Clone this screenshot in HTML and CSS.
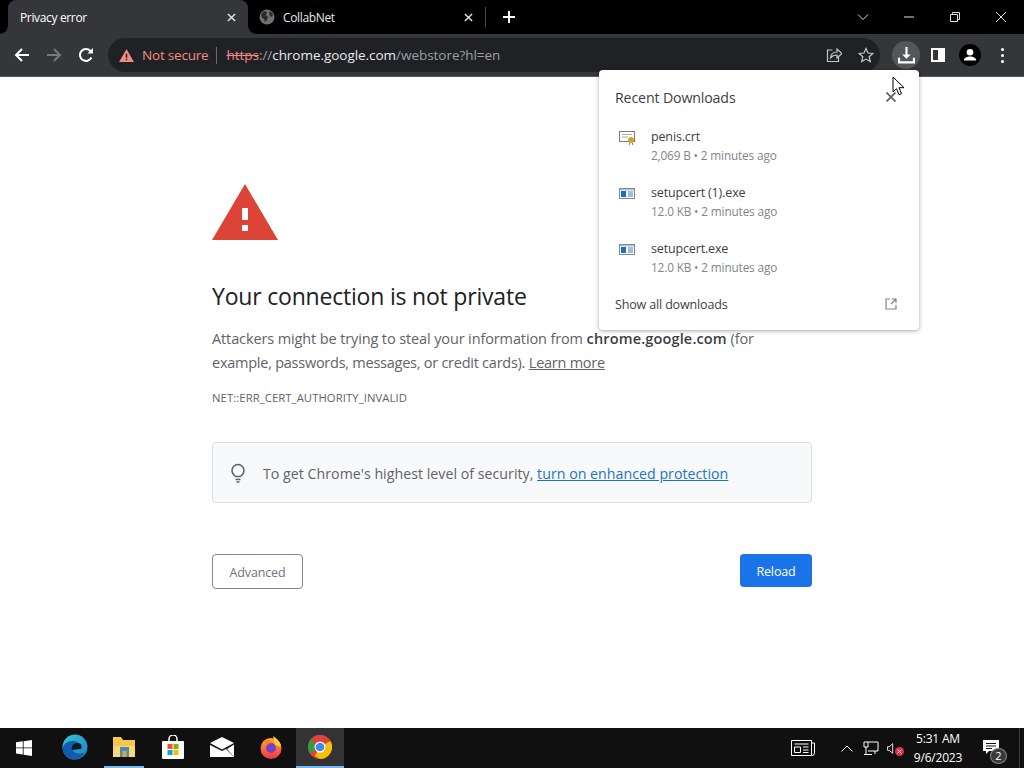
FILE: index.html
```html
<!DOCTYPE html>
<html lang="en">
<head>
<meta charset="utf-8">
<title>Privacy error</title>
<link rel="stylesheet" href="styles.css">
</head>
<body>
<div class="browser">
  <div class="tabstrip">
    <div class="tab active">
      <span class="tab-title">Privacy error</span>
      <svg class="tab-x" viewBox="0 0 10 10"><path d="M1 1l8 8M9 1l-8 8"/></svg>
    </div>
    <div class="tab">
      <svg class="globe" viewBox="0 0 16 16"><circle cx="8" cy="8" r="7.5" fill="#6f7275"/><path d="M2 5l3-3 3 1-1 3 2 2-1 3-2 2-1-3-2-1zM11 2l3 3-1 3-2-1-1-3z" fill="#2a2b2d"/></svg>
      <span class="tab-title">CollabNet</span>
      <svg class="tab-x" viewBox="0 0 10 10"><path d="M1 1l8 8M9 1l-8 8"/></svg>
    </div>
    <span class="tab-sep"></span>
    <svg class="newtab" viewBox="0 0 12 12"><path d="M6 0v12M0 6h12"/></svg>
    <div class="winctl">
      <svg class="wc wc-chev" viewBox="0 0 12 12"><path d="M1 3.5l5 5 5-5"/></svg>
      <svg class="wc" viewBox="0 0 12 12"><path d="M1 6h10"/></svg>
      <svg class="wc" viewBox="0 0 12 12"><path d="M1.5 3.5h7v7h-7zM3.5 3.5v-2h7v7h-2"/></svg>
      <svg class="wc" viewBox="0 0 12 12"><path d="M1 1l10 10M11 1L1 11"/></svg>
    </div>
  </div>
  <div class="toolbar">
    <svg class="nav" viewBox="0 0 16 16"><path class="st-w" d="M15 8H2M8 2L2 8l6 6"/></svg>
    <svg class="nav" viewBox="0 0 16 16"><path class="st-g" d="M1 8h13M8 2l6 6-6 6"/></svg>
    <svg class="nav" viewBox="0 0 16 16"><path class="st-w" d="M13.4 10.5A6 6 0 1 1 12.5 4"/><path d="M9.5 6.5h5.5V1z" fill="#fff"/></svg>
    <div class="omnibox">
      <svg class="warn" viewBox="0 0 16 14"><path d="M8 0l8 14H0z" fill="#f28b82"/><path d="M7.2 5h1.6v4.5H7.2zM7.2 10.4h1.6V12H7.2z" fill="#202124"/></svg>
      <span class="notsecure">Not secure</span>
      <span class="omni-sep"></span>
      <span class="url"><s class="scheme">https</s><span class="dim">://</span><span class="host">chrome.google.com</span><span class="dim">/webstore?hl=en</span></span>
      <svg class="omni-ic" viewBox="0 0 16 16"><path d="M6.5 3H1.5v11.5h11V10M4.5 11c.3-4 3-6 6.5-6V2l5 4.5-5 4.5V8c-3 0-5 1-6.500 3z"/></svg>
      <svg class="omni-ic star" viewBox="0 0 16 16"><path d="M8 1.500l2 4.500 4.800.5-3.600 3.200 1 4.800L8 12.100l-4.200 2.400 1-4.800L1.200 6.500 6 6z"/></svg>
    </div>
    <div class="dl-btn">
      <svg viewBox="0 0 16 16"><path d="M7 0h2v7h3l-4 4-4-4h3z" fill="#fff"/><path d="M1 10v4.500h14V10" fill="none" stroke="#fff" stroke-width="2"/></svg>
    </div>
    <div class="sidepanel"><span></span></div>
    <div class="avatar">
      <svg viewBox="0 0 22 22"><circle cx="11" cy="11" r="11" fill="#000"/><circle cx="11" cy="8.300" r="3.300" fill="#fff"/><path d="M4.800 16.500c0-2.800 3.500-4 6.200-4s6.200 1.200 6.200 4z" fill="#fff"/></svg>
    </div>
    <div class="kebab"><i></i><i></i><i></i></div>
  </div>
  <main class="page">
    <div class="interstitial">
      <svg class="bigwarn" viewBox="0 0 66 56"><path d="M33 0l33 56H0z" fill="#db4437"/><path d="M30 24h6v12h-6zM30 41h6v6h-6z" fill="#fff"/></svg>
      <h1>Your connection is not private</h1>
      <p class="lead">Attackers might be trying to steal your information from <b>chrome.google.com</b> (for<br><span class="tight">example, passwords, messages, or credit cards).</span> <a class="plain">Learn more</a></p>
      <p class="code">NET::ERR_CERT_AUTHORITY_INVALID</p>
      <div class="promo">
        <svg class="bulb" viewBox="0 0 14 20"><path d="M4.500 13.500C2.500 12 1 10.500 1 7.500a6 6 0 0 1 12 0c0 3-1.500 4.500-3.500 6z"/><path d="M4.500 16.500h5M5.500 19h3"/></svg>
        <span>To get Chrome's highest level of security, <a class="blue">turn on enhanced protection</a></span>
      </div>
      <div class="actions">
        <button class="btn-adv">Advanced</button>
        <button class="btn-reload">Reload</button>
      </div>
    </div>
    <aside class="bubble">
      <div class="bubble-head">
        <span>Recent Downloads</span>
        <svg class="bubble-x" viewBox="0 0 10 10"><path d="M.5.500l9 9M9.500.500l-9 9"/></svg>
      </div>
      <div class="dl">
        <svg class="file" viewBox="0 0 18 16"><rect x=".5" y="1.500" width="15" height="10" fill="#fff" stroke="#7a7a7a"/><path d="M3 4.500h10M3 7h6" stroke="#a8a8a8"/><circle cx="12" cy="10" r="3" fill="#d6a32a"/><path d="M10.500 12.500v2.500M13.500 12.500v2.500" stroke="#c08a1a"/></svg>
        <div><div class="fname">penis.crt</div><div class="fmeta">2,069 B • 2 minutes ago</div></div>
      </div>
      <div class="dl">
        <svg class="file" viewBox="0 0 18 16"><rect x=".5" y="2.500" width="15" height="10" fill="#fff" stroke="#7a8a99"/><rect x="1" y="3" width="14" height="1.500" fill="#b4c4d4"/><rect x="2" y="5" width="5" height="6" fill="#1a6fc0"/><path d="M9 6h5M9 8h5M9 10h5" stroke="#3a7fc0"/></svg>
        <div><div class="fname">setupcert (1).exe</div><div class="fmeta">12.0 KB • 2 minutes ago</div></div>
      </div>
      <div class="dl">
        <svg class="file" viewBox="0 0 18 16"><rect x=".5" y="2.500" width="15" height="10" fill="#fff" stroke="#7a8a99"/><rect x="1" y="3" width="14" height="1.500" fill="#b4c4d4"/><rect x="2" y="5" width="5" height="6" fill="#1a6fc0"/><path d="M9 6h5M9 8h5M9 10h5" stroke="#3a7fc0"/></svg>
        <div><div class="fname">setupcert.exe</div><div class="fmeta">12.0 KB • 2 minutes ago</div></div>
      </div>
      <div class="bubble-foot">
        <span>Show all downloads</span>
        <svg class="ext" viewBox="0 0 12 12"><path d="M5 1H1v10h10V7M6 6l5-5M7 1h4v4"/></svg>
      </div>
    </aside>
    <svg class="cursor" viewBox="0 0 13 20"><path d="M1 1v15l3.500-3.300 2.500 6 2.500-1-2.500-6H12z" fill="#fff" stroke="#000" stroke-width="1"/></svg>
  </main>
  <div class="taskbar">
    <svg class="start" viewBox="0 0 16 16"><path d="M0 2.300l6.800-1v6.200H0zM7.600 1.200L16 0v7.500H7.600zM0 8.300h6.800v6.300L0 13.600zM7.600 8.300H16V16l-8.400-1.200z" fill="#fff"/></svg>
    <div class="tb-app edge">
      <svg viewBox="0 0 26 26"><defs><linearGradient id="e1" x1="0" y1="0" x2="1" y2="1"><stop offset="0" stop-color="#37c6d0"/><stop offset="1" stop-color="#1a7fc4"/></linearGradient></defs><circle cx="13" cy="13" r="12.500" fill="url(#e1)"/><path d="M.8 14C2 7 12 5 17 9c3 2.500 3 6 1 6h-7c0 4 6 6 11.500 3.500-2 5-8 7.500-12.500 7C4 24.500 .5 19 .8 14z" fill="#125cb0"/><path d="M10 16c-1.500-4 2-7 5.500-7 3.500 0 5 3 3.500 6z" fill="#0c1a2a"/></svg>
    </div>
    <div class="tb-app running">
      <svg viewBox="0 0 24 22"><path d="M1 1h8l2 3h12v17H1z" fill="#f4c84a"/><path d="M1 10h22v11H1z" fill="#f8d878"/><rect x="8" y="11" width="9" height="10" fill="#4c8cb8"/><rect x="10.500" y="15" width="4" height="6" fill="#d8a848"/></svg>
    </div>
    <div class="tb-app">
      <svg viewBox="0 0 24 24"><path d="M8 7V4a4 4 0 0 1 8 0v3" fill="none" stroke="#fff" stroke-width="1.500"/><rect x="1" y="6" width="22" height="18" rx="1" fill="#fff"/><rect x="6.500" y="9" width="5" height="5" fill="#f25022"/><rect x="12.500" y="9" width="5" height="5" fill="#7fba00"/><rect x="6.500" y="15" width="5" height="5" fill="#00a4ef"/><rect x="12.500" y="15" width="5" height="5" fill="#ffb900"/></svg>
    </div>
    <div class="tb-app">
      <svg viewBox="0 0 24 20"><path d="M0 6l12-6 12 6-12 6.500z" fill="#fff"/><path d="M0 8l12 6 4-2 8 8H0z" fill="#fff"/><path d="M24 7.500V20l-7-8z" fill="#fff"/></svg>
    </div>
    <div class="tb-app">
      <svg viewBox="0 0 24 24"><defs><linearGradient id="f1" x1="0" y1="0" x2="0" y2="1"><stop offset="0" stop-color="#ffb020"/><stop offset="1" stop-color="#f0324c"/></linearGradient></defs><circle cx="12" cy="13.500" r="10.500" fill="url(#f1)"/><path d="M14 1c5 3 8 7 8 11l-6-2z" fill="#ffc93a"/><circle cx="12" cy="13" r="5" fill="#7a3fc8"/><path d="M6 6c2-1 5-1 7 1l-5 3z" fill="#ff7a2a"/></svg>
    </div>
    <div class="tb-app active">
      <svg viewBox="0 0 24 24"><circle cx="12" cy="12" r="12" fill="#db4437"/><path d="M12 12L1.600 18A12 12 0 0 1 4 3z" fill="#2f9e44"/><path d="M12 12l10.400-6A12 12 0 0 1 12 24L6.800 21z" fill="#f4c20d"/><path d="M12 6h10.400A12 12 0 0 0 3.500 3.500L7 11z" fill="#db4437"/><circle cx="12" cy="12" r="5.500" fill="#fff"/><circle cx="12" cy="12" r="4.300" fill="#4285f4"/></svg>
    </div>
    <div class="tray">
      <svg class="news" viewBox="0 0 24 16"><path d="M.5.500h20v15H.5zM20.500 3h3v10a2.500 2.500 0 0 1-2.500 2.500M3.500 4h14M3.500 7h6v5.500h-6zM12 7h5.500M12 10h5.500M12 12.500h5.500"/></svg>
      <svg class="chev" viewBox="0 0 12 7"><path d="M.5 6.500L6 1l5.500 5.500"/></svg>
      <svg class="net" viewBox="0 0 16 15"><path d="M5 1h10v9H5M1 1h4v5H1zM3 6v7M1 13.500h8M12 10v3"/></svg>
      <span class="vol">
        <svg class="spk" viewBox="0 0 8 12"><path d="M.5 4h2L6.500.500v11L2.500 8h-2z"/></svg>
        <svg class="mute" viewBox="0 0 10 10"><circle cx="5" cy="5" r="5" fill="#d9324a"/><path d="M3 3l4 4M7 3l-4 4" stroke="#fff"/></svg>
      </span>
      <div class="clock"><div>5:31 AM</div><div>9/6/2023</div></div>
      <span class="notif">
        <svg viewBox="0 0 16 15"><path d="M0 0h16v11H6l-3 3v-3H0z" fill="#fff"/><path d="M3 3.500h10M3 6h10M3 8.500h6" stroke="#111"/></svg>
        <b>2</b>
      </span>
      <span class="desk-edge"></span>
    </div>
  </div>
</div>
</body>
</html>
```

FILE: styles.css
```css
* { box-sizing: border-box; }
html, body { margin: 0; height: 100%; }
body { font-family: "Open Sans", "Noto Sans", sans-serif; overflow: hidden; }
.browser { width: 1024px; height: 768px; display: flex; flex-direction: column; background: #fff; }

.tabstrip { height: 34px; background: #000; display: flex; align-items: center; color: #fff; padding-left: 8px; flex: none; }
.tab { width: 240px; height: 34px; display: flex; align-items: center; padding: 0 10px 0 12px; font-size: 12px; border-radius: 8px 8px 0 0; }
.tab.active { background: #35363a; position: relative; }
.tab.active::before, .tab.active::after { content: ""; position: absolute; bottom: 0; width: 8px; height: 8px; }
.tab.active::before { left: -8px; background: radial-gradient(circle at 0 0, #000 7.5px, #35363a 8px); }
.tab.active::after { right: -8px; background: radial-gradient(circle at 100% 0, #000 7.5px, #35363a 8px); }
.tab:not(.active) { width: 237px; padding-left: 11px; }
.tab-title { flex: 1; letter-spacing: -.35px; }
.tab:not(.active) .tab-title { color: #e8eaed; }
.tab-x { width: 9px; height: 9px; fill: none; stroke: #e8eaed; stroke-width: 1.500; margin-right: 2px; }
.globe { width: 16px; height: 16px; margin-right: 8px; }
.tab-sep { width: 1px; height: 20px; background: #4a4a4a; }
.newtab { width: 12px; height: 12px; margin-left: 17px; fill: none; stroke: #fff; stroke-width: 2; }
.winctl { margin-left: auto; display: flex; align-items: center; }
.wc { width: 12px; height: 12px; fill: none; stroke: #e0e0e0; stroke-width: 1; margin-left: 34px; }
.wc-chev { margin-left: 0; }
.winctl .wc:last-child { margin-right: 17px; }

.toolbar { height: 43px; background: #35363a; display: flex; align-items: center; flex: none; padding-left: 14px; border-bottom: 1px solid #55565a; }
.nav { width: 16px; height: 16px; fill: none; stroke-width: 2; margin-right: 16px; }
.st-w { stroke: #fff; fill: none; }
.st-g { stroke: #77787b; fill: none; }
.omnibox { width: 772px; height: 34px; margin-left: -2px; background: #202124; border-radius: 17px; display: flex; align-items: center; padding-left: 11px; padding-right: 6px; font-size: 13.500px; letter-spacing: -.2px; }
.warn { width: 15px; height: 13px; margin-right: 8px; }
.notsecure { color: #f28b82; }
.omni-sep { width: 1px; height: 17px; background: #6a6b6e; margin: 0 9px 0 8px; }
.url { flex: 1; white-space: nowrap; letter-spacing: -.04px; }
.scheme { color: #f28b82; }
.dim { color: #9aa0a6; }
.host { color: #e8eaed; }
.omni-ic { width: 16px; height: 16px; fill: none; stroke: #c4c7ca; stroke-width: 1.200; margin-left: 16px; }
.dl-btn { width: 28px; height: 28px; border-radius: 50%; background: #55565a; margin-left: 12px; display: flex; align-items: center; justify-content: center; }
.dl-btn svg { width: 17px; height: 17px; }
.sidepanel { width: 14px; height: 14px; border: 2px solid #fff; margin-left: 11px; display: flex; justify-content: flex-end; }
.sidepanel span { width: 5px; background: #fff; }
.avatar { width: 22px; height: 22px; margin-left: 14px; display: flex; }
.kebab { margin-left: 20px; display: flex; flex-direction: column; gap: 3px; }
.kebab i { width: 3px; height: 3px; border-radius: 50%; background: #fff; display: block; }

.page { flex: 1; position: relative; color: #5f6368; padding-left: 212px; }
.interstitial { width: 600px; padding-top: 107px; }
.bigwarn { width: 66px; height: 56px; display: block; }
h1 { font-weight: 400; font-size: 23px; color: #202124; margin: 41px 0 0; line-height: 30px; letter-spacing: -.2px; }
.lead { font-size: 14.500px; line-height: 24px; margin: 16px 0 0; letter-spacing: -.12px; }
.lead b { color: #3c4043; font-weight: 600; letter-spacing: .15px; }
.tight { letter-spacing: -.25px; }
.plain { color: #5f6368; text-decoration: underline; letter-spacing: -.25px; }
.code { font-size: 11.300px; margin: 13px 0 0; line-height: 20px; letter-spacing: .07px; }
.promo { margin-top: 34px; height: 61px; background: #f8f9fa; border: 1px solid #dadce0; border-radius: 4px; display: flex; align-items: center; padding: 1px 0 0 18px; font-size: 14.200px; letter-spacing: .02px; }
.bulb { width: 14px; height: 20px; fill: none; stroke: #5f6368; stroke-width: 1.500; margin: -1px 18px 0 0; }
.blue { color: #1a73c8; text-decoration: underline; }
.actions { display: flex; justify-content: space-between; align-items: flex-start; margin-top: 51px; }
.btn-adv, .btn-reload { font-family: inherit; font-size: 12.500px; letter-spacing: -.15px; border-radius: 4px; padding: 2px 0 0; }
.btn-adv { width: 91px; height: 35px; background: #fff; border: 1px solid #80868b; color: #6f7378; }
.btn-reload { width: 72px; height: 33px; background: #1a73e8; border: 0; color: #fff; }

.bubble { position: absolute; left: 599px; top: -7px; width: 320px; height: 260px; background: #fff; border-radius: 4px; box-shadow: 0 1px 4px rgba(0,0,0,.35); padding: 0 23px 0 16px; color: #3c4043; font-size: 12.500px; letter-spacing: -.15px; }
.bubble-head { height: 48px; display: flex; justify-content: space-between; align-items: center; font-size: 14.200px; padding-top: 6px; }
.bubble-x { width: 10px; height: 10px; fill: none; stroke: #5f6368; stroke-width: 1.800; }
.dl { height: 56px; display: flex; align-items: center; }
.file { width: 18px; height: 16px; margin: 12px 14px 0 4px; flex: none; align-self: flex-start; }
.fname { line-height: 19px; }
.fmeta { line-height: 19px; font-size: 11.800px; color: #80868b; }
.bubble-foot { height: 36px; display: flex; justify-content: space-between; align-items: center; }
.ext { width: 12px; height: 12px; fill: none; stroke: #80868b; stroke-width: 1.200; margin-right: -1px; }
.cursor { position: absolute; left: 892px; top: -1px; width: 13px; height: 20px; }

.taskbar { height: 40px; background: #101010; display: flex; align-items: center; flex: none; padding-left: 16px; color: #fff; }
.start { width: 16px; height: 16px; margin-right: 19px; }
.tb-app { width: 48px; height: 40px; display: flex; align-items: center; justify-content: center; margin-right: 1px; border-bottom: 2px solid transparent; }
.tb-app svg { width: 24px; height: 24px; }
.tb-app.edge svg { width: 26px; height: 26px; }
.tb-app.running { background: linear-gradient(#76b9ed, #76b9ed) center bottom / 40px 2px no-repeat; border-bottom: 0; padding-bottom: 2px; }
.tb-app.active { background: #333; border-bottom-color: #76b9ed; }
.tray { margin-left: auto; display: flex; align-items: center; height: 40px; position: relative; }
.news { width: 24px; height: 16px; fill: none; stroke: #fff; stroke-width: 1; margin-right: 26px; }
.chev { width: 12px; height: 7px; fill: none; stroke: #fff; stroke-width: 1; margin-right: 10px; }
.net { width: 16px; height: 15px; fill: none; stroke: #fff; stroke-width: 1; margin-right: 8px; }
.vol { position: relative; width: 20px; height: 16px; display: flex; align-items: center; margin-right: 1px; }
.spk { width: 7px; height: 11px; fill: none; stroke: #fff; stroke-width: 1; }
.mute { position: absolute; left: 8px; top: 7px; width: 9px; height: 9px; }
.clock { font-size: 12px; text-align: center; line-height: 19px; width: 60px; letter-spacing: -.2px; }
.notif { position: relative; width: 24px; height: 20px; margin: 0 15px 0 12px; }
.notif svg { width: 16px; height: 15px; position: absolute; left: 3px; top: 2px; }
.notif b { position: absolute; left: 10px; top: 10px; width: 17px; height: 16px; border-radius: 50%; background: #3a3a3a; border: 1px solid #888; color: #fff; font-size: 11px; line-height: 14px; text-align: center; font-weight: 400; }
.desk-edge { width: 1px; height: 40px; background: #3a3a3a; margin-right: 4px; }
```
